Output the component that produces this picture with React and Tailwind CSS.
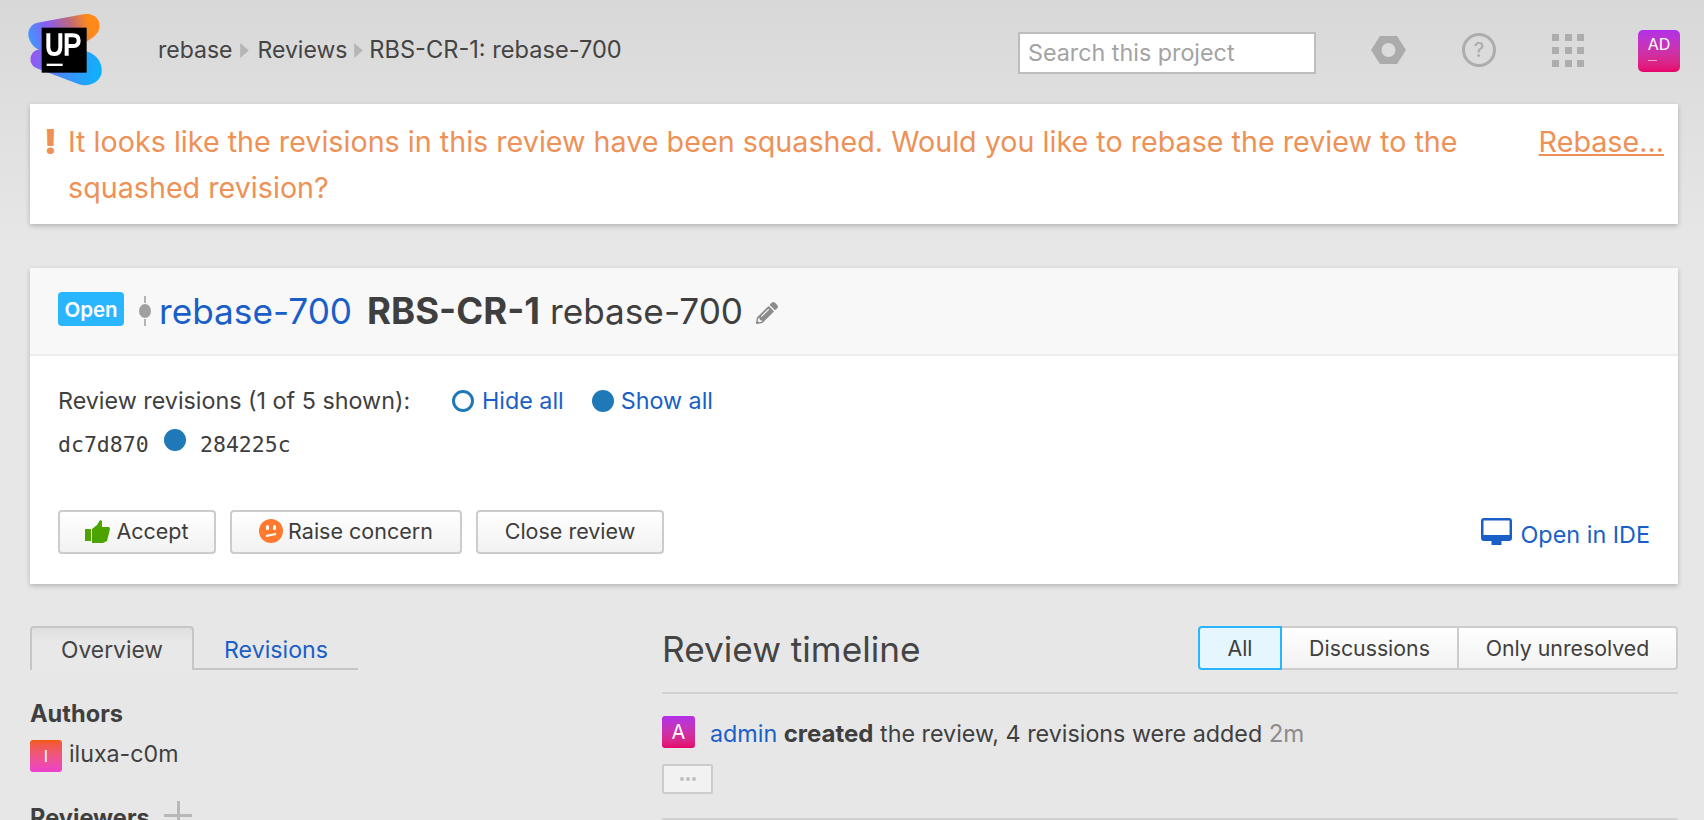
import React from "react";
import { FaPencilAlt } from "react-icons/fa";

const Logo = () => (
  <svg width="90" height="85" viewBox="0 0 270 255" className="shrink-0">
    <defs>
      <linearGradient id="lgTop" x1="25" y1="110" x2="240" y2="50" gradientUnits="userSpaceOnUse">
        <stop offset="0" stopColor="#3a9bff" />
        <stop offset="0.3" stopColor="#8a5cf0" />
        <stop offset="0.6" stopColor="#b9697f" />
        <stop offset="0.85" stopColor="#ff8a1a" />
      </linearGradient>
      <linearGradient id="lgBot" x1="30" y1="160" x2="245" y2="200" gradientUnits="userSpaceOnUse">
        <stop offset="0" stopColor="#9a56f0" />
        <stop offset="0.5" stopColor="#3f8ffb" />
        <stop offset="1" stopColor="#0db2fb" />
      </linearGradient>
    </defs>
    <path d="M52 53L190 28C222 22 244 44 238 70C234 90 215 100 200 110L100 150L60 135C30 125 20 90 27 75C31 63 40 56 52 53Z" fill="url(#lgTop)" />
    <path d="M50 135C25 145 25 180 50 190L175 237C215 250 250 225 245 190C242 165 225 145 195 138L100 120Z" fill="url(#lgBot)" />
    <rect x="65" y="68" width="135" height="135" fill="#000" />
    <path d="M85 85V125C85 140 92 147 103 147C114 147 121 140 121 125V85M140 152V91H158C170 91 176 97 176 107C176 117 170 123 158 123H140" fill="none" stroke="#fff" strokeWidth="12" />
    <rect x="80" y="176" width="48" height="7" fill="#fff" />
  </svg>
);

const Arrow = ({ className }) => (
  <svg width="9" height="15" viewBox="0 0 8 14" className={`shrink-0 ${className}`}><path d="M0 0L8 7L0 14Z" fill="#b5b5b5" /></svg>
);

const Hex = () => (
  <svg width="35" height="28" viewBox="0 0 35 28"><path fillRule="evenodd" d="M9 0H26L35 14L26 28H9L0 14ZM17.5 7A7 7 0 1 0 17.5 21A7 7 0 1 0 17.5 7Z" fill="#ababab" /></svg>
);

const Grid = () => (
  <div className="grid grid-cols-3 gap-x-[6px] gap-y-[6px] w-[32px]">
    {[0, 1, 2, 3, 4, 5, 6, 7, 8].map((i) => (
      <span key={i} className="block w-[7px] h-[7px] bg-[#adadad]" />
    ))}
  </div>
);

const Thumb = () => (
  <svg width="25" height="23" viewBox="0 0 25 23" className="shrink-0">
    <path d="M0 9H6V21H0Z" fill="#4da400" />
    <path d="M7 9L12 5L15 0L17 1V7H24L25 9L22 21L18 23H7Z" fill="#4da400" />
  </svg>
);

const Face = () => (
  <svg width="24" height="24" viewBox="0 0 24 24" className="shrink-0">
    <circle cx="12" cy="12" r="12" fill="#ff7a2f" />
    <rect x="7" y="6" width="3" height="5" rx="1.5" fill="#fff" />
    <rect x="14" y="6" width="3" height="5" rx="1.5" fill="#fff" />
    <path d="M7 17L17 15" stroke="#fff" strokeWidth="2" />
  </svg>
);

const Monitor = () => (
  <svg width="31" height="27" viewBox="0 0 31 27" className="shrink-0">
    <path fillRule="evenodd" d="M3 0H28A3 3 0 0 1 31 3V20A3 3 0 0 1 28 23H3A3 3 0 0 1 0 20V3A3 3 0 0 1 3 0ZM2.5 2.5V17H28.5V2.5Z" fill="#1a5fc8" />
    <rect x="10.5" y="22" width="10" height="5" fill="#1a5fc8" />
  </svg>
);

const Branch = () => (
  <svg width="12" height="30" viewBox="0 0 12 30" className="shrink-0">
    <rect x="5" y="0" width="2" height="7" fill="#b3b3b3" />
    <rect x="5" y="23" width="2" height="7" fill="#b3b3b3" />
    <ellipse cx="6" cy="15" rx="6" ry="7" fill="#a0a0a0" />
  </svg>
);

const Btn = ({ w, children }) => (
  <button className={`flex items-center justify-center gap-[2px] h-[44px] pb-[2px] ${w} rounded-[4px] border-2 border-[#cccccc] bg-linear-to-b from-[#ffffff] to-[#f2f2f2] text-[#3d3d3d] text-[21.5px]`}>
    {children}
  </button>
);

export default function App() {
  return (
    <div className="h-[820px] overflow-hidden bg-linear-to-b from-[#d8d8d8] to-[#e7e7e7] to-30% text-[#3f3f3f] text-[23.3px] font-['Inter','Liberation_Sans',sans-serif]">
      <header className="flex items-start h-[104px] pt-[5px] pl-[20px] pr-[24px]">
        <Logo />
        <nav className="flex items-center h-[90px] ml-[48px] text-[23px] text-[#444]">
          <span>rebase</span><Arrow className="mx-[8px]" /><span>Reviews</span><Arrow className="ml-[7px] mr-[6px]" /><span className="text-[23.6px]">RBS-CR-1: rebase-700</span>
        </nav>
        <div className="ml-auto flex items-center h-[90px]">
          <div className="flex items-center w-[298px] h-[42px] mt-[6px] px-[8px] bg-white border-2 border-[#bdbdbd] text-[23.3px] text-[#a3a3a3]">Search this project</div>
          <div className="ml-[55px]"><Hex /></div>
          <div className="ml-[56px] flex items-center justify-center w-[34px] h-[34px] rounded-full border-[3px] border-[#adadad] text-[20px] font-medium text-[#adadad]">?</div>
          <div className="ml-[56px]"><Grid /></div>
          <div className="ml-[54px] mt-[2px] flex flex-col items-center w-[42px] h-[42px] rounded-[5px] bg-linear-to-b from-[#b32fe8] to-[#e6006b] text-white text-[16px] leading-[18px] pt-[5px]">
            <span>AD</span>
            <span className="block w-[9px] h-[1px] mt-[7px] mr-[14px] bg-[#f2a0c8]" />
          </div>
        </div>
      </header>

      <section className="flex justify-between mx-[30px] mr-[26px] h-[120px] bg-white shadow-[0_2px_5px_rgba(0,0,0,0.22)] pl-[14px] pr-[14px] pt-[15px] text-[28.7px] leading-[46px] text-[#ee9156]">
        <div className="flex">
          <span className="w-[24px] text-[34px] font-black">!</span>
          <p className="w-[1400px]">It looks like the revisions in this review have been squashed. Would you like to rebase the review to the squashed revision?</p>
        </div>
        <a className="underline">Rebase...</a>
      </section>

      <section className="mt-[44px] mx-[30px] mr-[26px] h-[316px] bg-white shadow-[0_2px_5px_rgba(0,0,0,0.22)] flex flex-col">
        <div className="flex items-center h-[88px] pl-[28px] pb-[4px] bg-[#f8f8f8] border-b-2 border-[#ededed] text-[35.2px]">
          <span className="flex items-center justify-center w-[66px] h-[34px] pt-[2px] rounded-[4px] bg-[#29b6ff] text-white text-[20.5px] font-semibold">Open</span>
          <div className="flex items-center pt-[4px]">
            <span className="ml-[15px]"><Branch /></span>
            <a className="ml-[8px] text-[#1a5fc8]">rebase-700</a>
            <b className="ml-[15px] text-[36.5px] font-bold">RBS-CR-1</b>
            <span className="ml-[10px]">rebase-700</span>
            <FaPencilAlt className="ml-[13px] mt-[3px] text-[#8c8c8c] text-[22px]" />
          </div>
        </div>
        <div className="flex-1 flex flex-col pl-[28px] pr-[28px]">
          <div className="flex items-center mt-[31px] h-[28px]">
            <span className="w-[394px]">Review revisions (1 of 5 shown):</span>
            <span className="block w-[22px] h-[22px] rounded-full border-[3px] border-[#1f78b8]" />
            <a className="ml-[8px] text-[#1a5fc8]">Hide all</a>
            <span className="ml-[28px] block w-[22px] h-[22px] rounded-full bg-[#1f78b8]" />
            <a className="ml-[7px] text-[#1a5fc8]">Show all</a>
          </div>
          <div className="flex items-center mt-[16px] h-[28px] text-[21.5px] font-['DejaVu_Sans_Mono','Liberation_Mono',monospace] text-[#3d3d3d]">
            <span className="w-[106px]">dc7d870</span>
            <span className="block w-[22px] h-[22px] -mt-[10px] rounded-full bg-[#1f78b8]" />
            <span className="ml-[14px]">284225c</span>
          </div>
          <div className="flex items-center mt-[51px]">
            <Btn w="w-[158px]"><Thumb /><span className="ml-[4px]">Accept</span></Btn>
            <span className="w-[14px]" />
            <Btn w="w-[232px]"><Face /><span className="ml-[3px]">Raise concern</span></Btn>
            <span className="w-[14px]" />
            <Btn w="w-[188px]">Close review</Btn>
            <a className="ml-auto flex items-center text-[#1a5fc8] text-[23.4px]"><Monitor /><span className="ml-[8px] mt-[5px]">Open in IDE</span></a>
          </div>
        </div>
      </section>

      <div className="flex mt-[42px] pl-[30px] pr-[26px]">
        <aside className="w-[632px] shrink-0">
          <div className="w-[328px] h-[44px] flex border-b-2 border-[#c6c6c6]">
            <div className="flex items-center justify-center w-[164px] h-[44px] pt-[2px] rounded-t-[4px] border-2 border-b-0 border-[#c6c6c6] bg-linear-to-b from-[#dedede] to-[#e8e8e8] to-30% text-[22.8px] text-[#444]">Overview</div>
            <div className="flex items-center justify-center w-[164px] pt-[6px] text-[23.2px] text-[#1a5fc8]">Revisions</div>
          </div>
          <div className="mt-[29px] font-bold text-[23.6px] leading-[30px]">Authors</div>
          <div className="flex items-center mt-[11px] h-[32px]">
            <span className="flex items-center justify-center w-[32px] h-[32px] rounded-[3px] bg-linear-to-b from-[#f25a0c] to-[#ee3ecb] text-white text-[16px]">I</span>
            <span className="ml-[7px] mb-[4px] text-[23.2px]">iluxa-c0m</span>
          </div>
          <div className="flex items-center mt-[29px]">
            <b className="font-bold text-[23.6px] leading-[30px]">Reviewers</b>
            <span className="relative block ml-[14px] mb-[6px] w-[28px] h-[28px]">
              <span className="absolute left-0 top-[13px] w-[28px] h-[3px] bg-[#b8b8b8]" />
              <span className="absolute left-[13px] top-0 w-[3px] h-[28px] bg-[#b8b8b8]" />
            </span>
          </div>
        </aside>
        <main className="flex-1 min-w-0">
          <div className="flex items-center justify-between h-[44px]">
            <h2 className="pt-[2px] text-[35.2px] font-normal text-[#444]">Review timeline</h2>
            <div className="flex h-[44px] text-[21.3px]">
              <span className="flex items-center justify-center w-[84px] pt-[1px] rounded-l-[4px] border-2 border-[#29b6ff] bg-[#e6f6ff]">All</span>
              <span className="flex items-center justify-center w-[175px] pt-[2px] border-y-2 border-[#cccccc] bg-linear-to-b from-[#ffffff] to-[#f2f2f2]">Discussions</span>
              <span className="flex items-center justify-center w-[221px] pt-[2px] rounded-r-[4px] border-2 border-[#cccccc] bg-linear-to-b from-[#ffffff] to-[#f2f2f2]">Only unresolved</span>
            </div>
          </div>
          <div className="mt-[22px] h-[2px] bg-[#d2d2d2]" />
          <div className="flex items-start mt-[22px] h-[32px]">
            <span className="flex items-center justify-center w-[33px] h-[32px] rounded-[3px] bg-linear-to-b from-[#b32fe8] to-[#e6006b] text-white text-[20px]">A</span>
            <span className="ml-[15px] pt-[2px] leading-[32px]"><a className="text-[#1a5fc8]">admin</a> <b className="font-bold text-[24px]">created</b> the review, 4 revisions were added <span className="text-[24px] text-[#8c8c8c]">2m</span></span>
          </div>
          <div className="flex items-center justify-center mt-[16px] w-[51px] h-[30px] rounded-[2px] border-2 border-[#cccccc] bg-[#f2f2f2] gap-[2px]">
            <span className="w-[4px] h-[4px] rounded-full bg-[#c0c0c0]" /><span className="w-[4px] h-[4px] rounded-full bg-[#c0c0c0]" /><span className="w-[4px] h-[4px] rounded-full bg-[#c0c0c0]" />
          </div>
          <div className="mt-[24px] h-[2px] bg-[#d2d2d2]" />
        </main>
      </div>
    </div>
  );
}
